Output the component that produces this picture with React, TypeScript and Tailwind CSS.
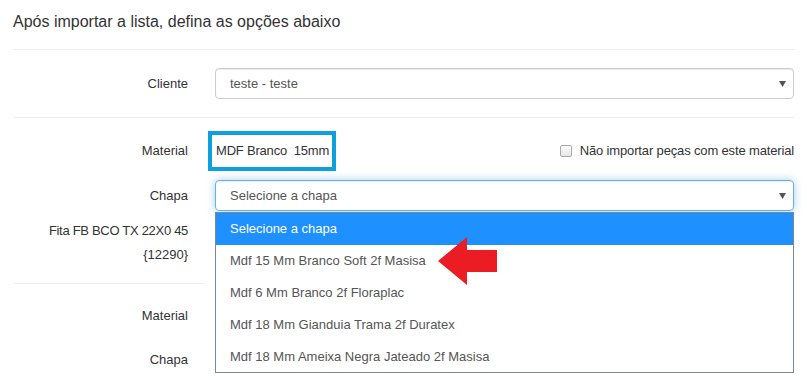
import React from "react";

function Caret() {
  return (
    <svg width="7" height="6" viewBox="0 0 7 6" className="absolute right-[7px] top-1/2 -translate-y-1/2">
      <polygon points="0,0 7,0 3.5,6" fill="#555" />
    </svg>
  );
}

function Label({ children }: { children: React.ReactNode }) {
  return <div className="w-[175px] shrink-0 text-right">{children}</div>;
}

export default function App() {
  const options = [
    "Mdf 15 Mm Branco Soft 2f Masisa",
    "Mdf 6 Mm Branco 2f Floraplac",
    "Mdf 18 Mm Gianduia Trama 2f Duratex",
    "Mdf 18 Mm Ameixa Negra Jateado 2f Masisa",
  ];
  return (
    <div className="relative w-[807px] h-[380px] overflow-hidden bg-white text-[13px] text-[#333] font-['Liberation_Sans',Arial,sans-serif]">
      <div className="pl-[13px] pr-[12px]">
        <div className="h-[50px] border-b border-[#eee] pt-[12px] text-[16px] leading-[20px]">
          Após importar a lista, defina as opções abaixo
        </div>
        <div className="h-[68px] border-b border-[#eee] pt-[18px] flex">
          <div className="flex items-center h-[31px]">
            <Label>Cliente</Label>
          </div>
          <div className="ml-[27px] flex-1 mr-[1px] relative h-[31px] border border-[#ccc] rounded-[4px] shadow-[inset_0_1px_1px_rgba(0,0,0,0.075)] flex items-center pl-[14px] text-[#555]">
            teste - teste
            <Caret />
          </div>
        </div>
        <div className="pt-[13px] flex items-center h-[40px] box-content">
          <Label>Material</Label>
          <div className="ml-[20px] h-[40px] border-[4px] border-[#0ea0dc] flex items-center pl-[4px] pr-[3px] whitespace-pre tracking-[-0.2px]">
            MDF Branco  15mm
          </div>
          <div className="flex-1" />
          <div className="flex items-center gap-[8px] mr-[1px]">
            <span className="w-[12px] h-[12px] rounded-[2px] border border-[#a9a9a9] bg-gradient-to-b from-[#fcfcfc] to-[#e6e6e6]" />
            <span className="tracking-[-0.15px]">Não importar peças com este material</span>
          </div>
        </div>
        <div className="flex mt-[9px]">
          <div className="flex items-center h-[31px]">
            <Label>Chapa</Label>
          </div>
          <div className="ml-[27px] flex-1 mr-[1px] relative h-[31px] border border-[#66afe9] rounded-[4px] shadow-[inset_0_1px_1px_rgba(0,0,0,0.075),0_0_8px_rgba(102,175,233,0.6)] flex items-center pl-[14px] text-[#555]">
            Selecione a chapa
            <Caret />
          </div>
        </div>
        <div className="flex mt-[8px] leading-[24px]">
          <Label>
            <span className="tracking-[-0.3px]">Fita FB BCO TX 22X0 45</span>
            <br />
            {"{12290}"}
          </Label>
        </div>
        <div className="w-[192px] border-b border-[#eee] mt-[16px]" />
        <div className="flex mt-[22px]">
          <Label>Material</Label>
        </div>
        <div className="flex mt-[24px]">
          <Label>Chapa</Label>
        </div>
      </div>

      <div className="absolute left-[215px] top-[212px] w-[579px] h-[161px] border border-[#7a8896] bg-white text-[#555]">
        <div className="h-[32px] bg-[#1e90ff] text-white flex items-center pl-[14px]">Selecione a chapa</div>
        {options.map((o) => (
          <div key={o} className="h-[32px] flex items-center pl-[14px]">
            {o}
          </div>
        ))}
      </div>

      <svg className="absolute left-0 top-0" width="807" height="380" viewBox="0 0 807 380">
        <polygon points="438,261 467,237 467,250 497,250 497,272 467,272 467,285" fill="#ec1c24" />
      </svg>
    </div>
  );
}
